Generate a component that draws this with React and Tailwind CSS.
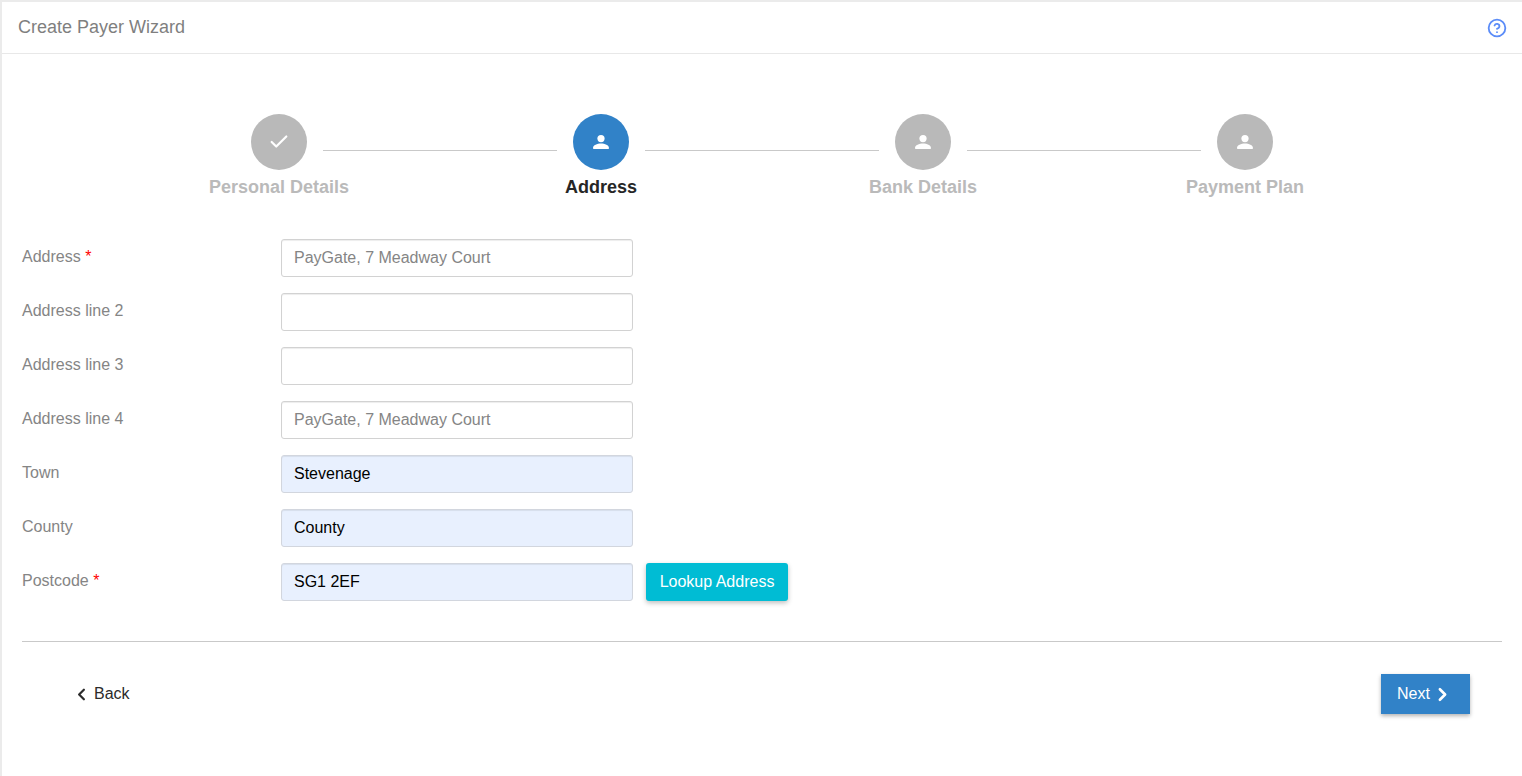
import React from "react";
import { Check, ChevronLeft, ChevronRight, CircleHelp } from "lucide-react";

const steps = [
  { label: "Personal Details", done: true },
  { label: "Address", active: true },
  { label: "Bank Details" },
  { label: "Payment Plan" },
];

const fields = [
  { label: "Address", required: true, placeholder: "PayGate, 7 Meadway Court" },
  { label: "Address line 2" },
  { label: "Address line 3" },
  { label: "Address line 4", placeholder: "PayGate, 7 Meadway Court" },
  { label: "Town", value: "Stevenage" },
  { label: "County", value: "County" },
  { label: "Postcode", required: true, value: "SG1 2EF", lookup: true },
];

const PersonIcon = () => (
  <svg width="18" height="18" viewBox="0 0 18 18" fill="white">
    <circle cx="9" cy="5.6" r="3.6" />
    <path d="M1 15.2c0-3 4.2-4.6 8-4.6s8 1.600 8 4.600c0 .5-.3.8-.8.8H1.800c-.5 0-.8-.3-.8-.8z" />
  </svg>
);

const App = () => {
  return (
    <div className="h-[776px] overflow-hidden bg-[#ebebeb] pt-[2px] pl-[2px] font-['Liberation_Sans',Arial,sans-serif]">
      <div className="h-full bg-white">
        {/* Header */}
        <div className="flex h-[52px] items-center justify-between border-b border-[#e8e8e8] pl-4 pr-[15px]">
          <h1 className="text-[18px] text-[#7f7f7f]">Create Payer Wizard</h1>
          <CircleHelp size={20} strokeWidth={2.2} className="text-[#5b8cf8]" />
        </div>

        {/* Stepper */}
        <div className="flex items-center pt-[60px] pl-[249px]">
          {steps.map((step, i) => (
            <React.Fragment key={step.label}>
              <div
                className={
                  step.active
                    ? "flex h-14 w-14 shrink-0 items-center justify-center rounded-full bg-[#3182c8]"
                    : "flex h-14 w-14 shrink-0 items-center justify-center rounded-full bg-[#b9b9b9]"
                }
              >
                {step.done ? <Check size={22} color="white" strokeWidth={2.4} /> : <PersonIcon />}
              </div>
              {i < steps.length - 1 && <div className="mx-4 mt-4 h-px w-[234px] bg-[#c9c9c9]" />}
            </React.Fragment>
          ))}
        </div>
        <div className="flex pt-[6px] pl-[116px]">
          {steps.map((step) => (
            <div
              key={step.label}
              className={
                step.active
                  ? "w-[322px] text-center text-[18px] leading-[22px] font-bold text-[#262626]"
                  : "w-[322px] text-center text-[18px] leading-[22px] font-bold text-[#bababa]"
              }
            >
              {step.label}
            </div>
          ))}
        </div>

        {/* Form */}
        <div className="flex flex-col gap-4 px-5 pt-[41px]">
          {fields.map((field) => (
            <div key={field.label} className="flex items-start">
              <label className="w-[259px] pt-[6px] text-base leading-6 text-[#858585]">
                {field.label}
                {field.required && <span className="text-[#ff0000]"> *</span>}
              </label>
              <input
                readOnly
                value={field.value || ""}
                placeholder={field.placeholder}
                className={
                  field.value
                    ? "h-[38px] w-[352px] rounded-[3px] border border-[#d2d6de] bg-[#e8f0fe] px-3 text-base text-black shadow-[inset_0_1px_1px_rgba(0,0,0,0.075)] outline-none"
                    : "h-[38px] w-[352px] rounded-[3px] border border-[#d2d2d2] bg-white px-3 text-base shadow-[inset_0_1px_1px_rgba(0,0,0,0.075)] outline-none placeholder:text-[#858585]"
                }
              />
              {field.lookup && (
                <button className="ml-[13px] h-[38px] w-[142px] rounded-[3px] bg-[#00bcd4] text-base text-white shadow-[0_2px_5px_rgba(0,0,0,0.26)]">
                  Lookup Address
                </button>
              )}
            </div>
          ))}
        </div>

        {/* Footer */}
        <div className="mx-5 mt-10 h-px bg-[#c9c9c9]" />
        <div className="flex items-center justify-between pt-8 pr-[50px] pl-[70px]">
          <button className="flex items-center gap-[3px] text-base text-[#2b2b2b]">
            <ChevronLeft size={19} strokeWidth={2.8} />
            Back
          </button>
          <button className="mr-[2px] flex h-10 w-[89px] items-center justify-center gap-[2px] bg-[#3182c8] pr-[1px] text-base text-white shadow-[0_2px_4px_rgba(0,0,0,0.3)]">
            Next
            <ChevronRight size={21} strokeWidth={3} />
          </button>
        </div>
      </div>
    </div>
  );
};

export default App;
